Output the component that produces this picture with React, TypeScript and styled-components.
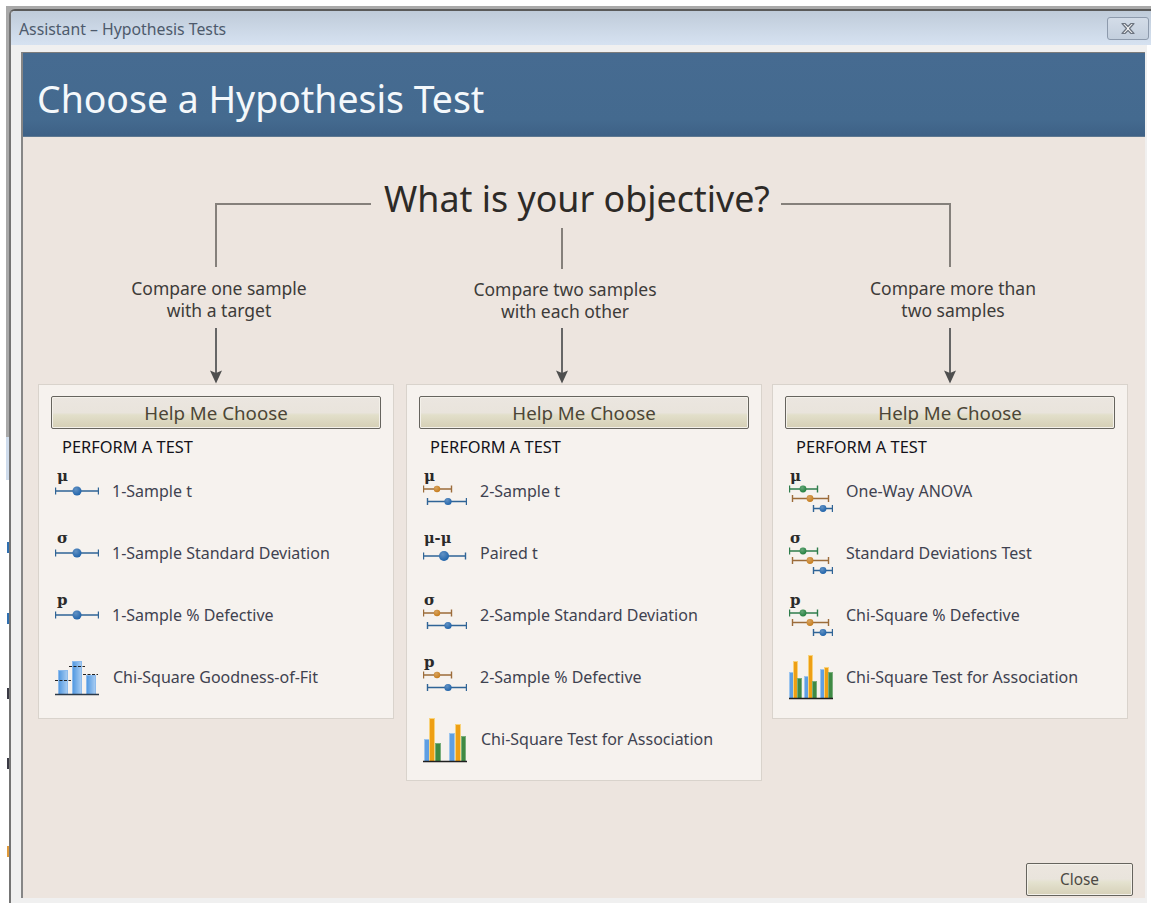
import React from 'react';
import styled, { createGlobalStyle } from 'styled-components';

type Interval = { from: number; to: number; dot: number; y: number; r: number; color: string; stroke: string };
type Bar = { x: number; w: number; y: number; kind: 'blue' | 'orange' | 'green' };

const GlobalStyle = createGlobalStyle`
  html, body {
    margin: 0;
    padding: 0;
    background: #fff;
  }
  * {
    box-sizing: border-box;
  }
`;

const BLUE = { color: '#1f63aa', stroke: '#2f6496' };
const ORANGE = { color: '#c67c1c', stroke: '#9c6c3a' };
const GREEN = { color: '#23803f', stroke: '#2f7d4c' };

// Error-bar glyphs for one, two and several samples
const one = (y = 24, dot = 22, r = 4.5, to = 44): Interval[] => [{ from: 0.5, to, dot, y, r, ...BLUE }];
const two: Interval[] = [
  { from: 0.5, to: 29, dot: 14, y: 22, r: 3.2, ...ORANGE },
  { from: 4.5, to: 44, dot: 25, y: 34.5, r: 3.6, ...BLUE },
];
const three: Interval[] = [
  { from: 0.5, to: 29, dot: 14, y: 22, r: 3.4, ...GREEN },
  { from: 3.5, to: 40, dot: 21, y: 31.5, r: 3.4, ...ORANGE },
  { from: 24.5, to: 44, dot: 34, y: 41.5, r: 3.4, ...BLUE },
];

const barsTwo: Bar[] = [
  { x: 1, w: 6, y: 24, kind: 'blue' },
  { x: 6, w: 6, y: 3, kind: 'orange' },
  { x: 12, w: 6, y: 28, kind: 'green' },
  { x: 26, w: 6, y: 18, kind: 'blue' },
  { x: 32, w: 6, y: 9, kind: 'orange' },
  { x: 38, w: 5, y: 21, kind: 'green' },
];
const barsThree: Bar[] = [
  { x: 0, w: 5, y: 19, kind: 'blue' },
  { x: 4, w: 5, y: 8, kind: 'orange' },
  { x: 8, w: 5, y: 25, kind: 'green' },
  { x: 15, w: 5, y: 23, kind: 'blue' },
  { x: 19, w: 5, y: 2, kind: 'orange' },
  { x: 23, w: 5, y: 28, kind: 'green' },
  { x: 31, w: 5, y: 16, kind: 'blue' },
  { x: 35, w: 5, y: 14, kind: 'orange' },
  { x: 39, w: 5, y: 19, kind: 'green' },
];

const SymbolIntervals = ({ symbol, items }: { symbol: string; items: Interval[] }) => (
  <svg width="44" height="48" viewBox="0 0 44 48">
    <defs>
      <radialGradient id="shine" cx="38%" cy="32%" r="70%">
        <stop offset="0" stopColor="#fff" stopOpacity="0.3" />
        <stop offset="1" stopColor="#fff" stopOpacity="0" />
      </radialGradient>
    </defs>
    <text
      x={items.length === 1 && symbol !== 'μ-μ' ? 2 : 1}
      y="14"
      fontFamily="'DejaVu Serif', 'Liberation Serif', serif"
      fontSize={symbol === 'μ-μ' ? 14.5 : 15}
      fontWeight="700"
      fill="#2a2a2a"
    >
      {symbol}
    </text>
    {items.map((b) => (
      <g key={b.y}>
        <path d={`M${b.from} ${b.y}H${b.to}M${b.from} ${b.y - 3.5}V${b.y + 3.5}M${b.to - 0.5} ${b.y - 3.5}V${b.y + 3.5}`} stroke={b.stroke} strokeWidth="1.4" fill="none" />
        <circle cx={b.dot} cy={b.y} r={b.r} fill={b.color} />
        <circle cx={b.dot} cy={b.y} r={b.r} fill="url(#shine)" />
      </g>
    ))}
  </svg>
);

const GoodnessChart = () => (
  <svg width="44" height="48" viewBox="0 0 44 48">
    <defs>
      <linearGradient id="histFill" x1="0" y1="0" x2="1" y2="0">
        <stop offset="0" stopColor="#4f97e0" />
        <stop offset="1" stopColor="#a9cdf2" />
      </linearGradient>
    </defs>
    {[
      { x: 3, y: 17 },
      { x: 17, y: 8 },
      { x: 31, y: 22 },
    ].map((b) => (
      <rect key={b.x} x={b.x + 0.5} y={b.y + 0.5} width="9" height={41 - b.y} fill="url(#histFill)" stroke="#8dbbec" />
    ))}
    <path d="M0 27.5H16M14 13.5H30M28 21.5H43" stroke="#222" strokeWidth="1" strokeDasharray="3 1.5" fill="none" />
    <path d="M0 41.5H44" stroke="#2c3a48" strokeWidth="1.4" />
  </svg>
);

const AssociationChart = ({ bars, base }: { bars: Bar[]; base: number }) => {
  const fills = {
    blue: { fill: '#5f9fe2', edge: '#9cc5ee' },
    orange: { fill: '#ee9f14', edge: '#f8d27a' },
    green: { fill: '#3f8a44', edge: '#79ad7b' },
  };
  return (
    <svg width="44" height="48" viewBox="0 0 44 48">
      {bars.map((b) => (
        <rect key={b.x} x={b.x + 0.5} y={b.y + 0.5} width={b.w - 1} height={base - b.y} fill={fills[b.kind].fill} stroke={fills[b.kind].edge} />
      ))}
      <path d={`M0 ${base + 0.5}H44`} stroke="#1f1f1f" strokeWidth="1.6" />
    </svg>
  );
};

const CloseGlyph = () => (
  <svg width="16" height="13" viewBox="0 0 16 13">
    <path d="M2 1.5h3l3 3 3-3h3l-4.5 5 4.5 5h-3l-3-3-3 3H2l4.5-5z" fill="#f4f4f4" stroke="#6c7480" strokeWidth="1.2" strokeLinejoin="round" />
  </svg>
);

const DownArrow = () => (
  <svg width="14" height="56" viewBox="0 0 14 56">
    <path d="M7 0V45" stroke="#666" strokeWidth="2" />
    <path d="M1 42.5L7 45L13 42.5L7 55.5z" fill="#4f4f4f" />
  </svg>
);

const Row = ({ icon, label, nudge }: { icon: React.ReactNode; label: string; nudge?: boolean }) => (
  <TestRow>
    <IconSlot>{icon}</IconSlot>
    <TestLabel $nudge={nudge}>{label}</TestLabel>
  </TestRow>
);

const App: React.FC = () => {
  return (
    <Page>
      <GlobalStyle />
      <BackWindow>
        <GrayEdge />
        <BlueEdge />
        <Sliver $top={62} $color="#2f6fb0" />
        <Sliver $top={60} $color="#2f6fb0" />
        <Sliver $top={64} $color="#3a3a44" />
        <Sliver $top={59} $color="#3a3a44" />
        <Sliver $top={77} $color="#e09a3a" />
      </BackWindow>

      <WindowShell>
        <Frame>
          <TitleBar>
            <TitleText>Assistant – Hypothesis Tests</TitleText>
            <CloseBox>
              <CloseGlyph />
            </CloseBox>
          </TitleBar>

          <ClientArea>
            <Panel>
              <Banner>Choose a Hypothesis Test</Banner>

              <Body>
                {/* Objective heading with the connectors running out to each side */}
                <ObjectiveRow>
                  <LeftElbow />
                  <ObjectiveColumn>
                    <Objective>What is your objective?</Objective>
                    <Stem />
                  </ObjectiveColumn>
                  <RightElbow />
                </ObjectiveRow>

                <BranchRow>
                  <Branch $gap={12}>
                    <Caption>
                      Compare one sample
                      <br />
                      with a target
                    </Caption>
                    <ArrowSlot>
                      <DownArrow />
                    </ArrowSlot>
                  </Branch>
                  <Branch $gap={10} $shift={44}>
                    <Caption $low>
                      Compare two samples
                      <br />
                      with each other
                    </Caption>
                    <ArrowSlot>
                      <DownArrow />
                    </ArrowSlot>
                  </Branch>
                  <Branch $gap={0}>
                    <Caption>
                      Compare more than
                      <br />
                      two samples
                    </Caption>
                    <ArrowSlot>
                      <DownArrow />
                    </ArrowSlot>
                  </Branch>
                </BranchRow>

                <CardRow>
                  <Card $gap={12}>
                    <HelpButton>Help Me Choose</HelpButton>
                    <CardHeading>PERFORM A TEST</CardHeading>
                    <Row icon={<SymbolIntervals symbol="μ" items={one()} />} label="1-Sample t" />
                    <Row icon={<SymbolIntervals symbol="σ" items={one()} />} label="1-Sample Standard Deviation" />
                    <Row icon={<SymbolIntervals symbol="p" items={one()} />} label="1-Sample % Defective" />
                    <Row icon={<GoodnessChart />} label="Chi-Square Goodness-of-Fit" nudge />
                  </Card>

                  <Card $gap={10}>
                    <HelpButton>Help Me Choose</HelpButton>
                    <CardHeading>PERFORM A TEST</CardHeading>
                    <Row icon={<SymbolIntervals symbol="μ" items={two} />} label="2-Sample t" />
                    <Row icon={<SymbolIntervals symbol="μ-μ" items={one(27, 21, 5, 43)} />} label="Paired t" />
                    <Row icon={<SymbolIntervals symbol="σ" items={two} />} label="2-Sample Standard Deviation" />
                    <Row icon={<SymbolIntervals symbol="p" items={two} />} label="2-Sample % Defective" />
                    <Row icon={<AssociationChart bars={barsTwo} base={46} />} label="Chi-Square Test for Association" nudge />
                  </Card>

                  <Card $gap={0}>
                    <HelpButton>Help Me Choose</HelpButton>
                    <CardHeading>PERFORM A TEST</CardHeading>
                    <Row icon={<SymbolIntervals symbol="μ" items={three} />} label="One-Way ANOVA" />
                    <Row icon={<SymbolIntervals symbol="σ" items={three} />} label="Standard Deviations Test" />
                    <Row icon={<SymbolIntervals symbol="p" items={three} />} label="Chi-Square % Defective" />
                    <Row icon={<AssociationChart bars={barsThree} base={45} />} label="Chi-Square Test for Association" />
                  </Card>
                </CardRow>

                <Footer>
                  <CloseButton>Close</CloseButton>
                </Footer>
              </Body>
            </Panel>
          </ClientArea>
        </Frame>
      </WindowShell>
    </Page>
  );
};

// Styled Components
const UI_FONT = `'Noto Sans', 'Open Sans', 'Liberation Sans', sans-serif`;

const Page = styled.div`
  display: flex;
  width: 1151px;
  height: 903px;
  overflow: hidden;
  background: #fff;
  font-family: ${UI_FONT};
`;

const BackWindow = styled.div`
  flex: none;
  width: 9px;
  padding: 6px 0 0 6px;
  display: flex;
  flex-direction: column;
`;

const GrayEdge = styled.div`
  height: 431px;
  background: #a9a9a9;
`;

const BlueEdge = styled.div`
  height: 43px;
  background: #cfdcec;
`;

const Sliver = styled.div<{ $top: number; $color: string }>`
  flex: none;
  height: 11px;
  margin-top: ${(p) => p.$top}px;
  margin-left: 1px;
  background: ${(p) => p.$color};
`;

const WindowShell = styled.div`
  flex: 1;
  min-width: 0;
  margin-top: 6px;
  padding-top: 3px;
  background: #a9a9a9;
`;

const Frame = styled.div`
  height: 100%;
  background: #fff;
  border-top: 2px solid #5a5a5a;
  border-left: 2px solid #747474;
  border-top-left-radius: 6px;
  overflow: hidden;
  display: flex;
  flex-direction: column;
`;

const TitleBar = styled.div`
  flex: none;
  height: 34px;
  display: flex;
  align-items: center;
  justify-content: space-between;
  padding: 0 2px 0 8px;
  background: linear-gradient(#bfcbd9, #d6e2f1);
`;

const TitleText = styled.div`
  padding-top: 2px;
  font-size: 15.8px;
  color: #4d5a6c;
`;

const CloseBox = styled.div`
  width: 42px;
  height: 23px;
  display: flex;
  align-items: center;
  justify-content: center;
  border: 1px solid #8d9aac;
  border-radius: 3px;
  background: linear-gradient(#d3dce8, #c3cfdd);
`;

const ClientArea = styled.div`
  flex: 1;
  min-height: 0;
  margin-right: 4px;
  padding: 7px 2px 5px 10px;
  background: #f0f0f0;
  display: flex;
`;

const Panel = styled.div`
  flex: 1;
  display: flex;
  flex-direction: column;
  border-left: 2px solid #868686;
  border-top: 1px solid #7c7c7c;
`;

const Banner = styled.div`
  flex: none;
  height: 84px;
  padding: 8px 0 0 14px;
  display: flex;
  align-items: center;
  font-size: 37.4px;
  color: #f4f8fb;
  background: linear-gradient(#466b91, #446a8f 80%, #3e6186);
  border-bottom: 1px solid #5e7891;
`;

const Body = styled.div`
  flex: 1;
  min-height: 0;
  display: flex;
  flex-direction: column;
  background: #ede5df;
`;

const ObjectiveRow = styled.div`
  flex: none;
  height: 132px;
  display: flex;
  align-items: flex-start;
`;

const LeftElbow = styled.div`
  flex: none;
  width: 156px;
  height: 64px;
  margin: 66px 13px 0 192px;
  border-top: 2px solid #85807b;
  border-left: 2px solid #85807b;
`;

const ObjectiveColumn = styled.div`
  flex: none;
  width: 386px;
  padding-top: 36px;
`;

const Objective = styled.div`
  height: 50px;
  font-size: 35.8px;
  line-height: 50px;
  white-space: nowrap;
  color: #2d2a27;
`;

const Stem = styled.div`
  width: 2px;
  height: 41px;
  margin: 5px 0 0 177px;
  background: #85807b;
`;

const RightElbow = styled.div`
  flex: none;
  width: 170px;
  height: 64px;
  margin: 66px 0 0 11px;
  border-top: 2px solid #85807b;
  border-right: 2px solid #85807b;
`;

const BranchRow = styled.div`
  flex: none;
  height: 115px;
  padding-left: 15px;
  display: flex;
`;

const Branch = styled.div<{ $gap: number; $shift?: number }>`
  flex: none;
  width: 356px;
  margin-right: ${(p) => p.$gap}px;
  padding-right: ${(p) => p.$shift ?? 0}px;
  display: flex;
  flex-direction: column;
  align-items: center;
`;

const Caption = styled.div<{ $low?: boolean }>`
  margin-top: ${(p) => (p.$low ? 9 : 8)}px;
  padding-left: 6px;
  font-size: 17.5px;
  line-height: 22px;
  text-align: center;
  color: #3d3b39;
`;

const ArrowSlot = styled.div`
  margin-top: auto;
  height: 56px;
  line-height: 0;
`;

const CardRow = styled.div`
  flex: none;
  padding-left: 15px;
  display: flex;
  align-items: flex-start;
`;

const Card = styled.div<{ $gap: number }>`
  flex: none;
  width: 356px;
  margin-right: ${(p) => p.$gap}px;
  padding: 11px 12px 10px 12px;
  background: #f6f2ee;
  border: 1px solid #d9d3cc;
`;

const HelpButton = styled.div`
  height: 33px;
  display: flex;
  align-items: center;
  justify-content: center;
  font-size: 18.7px;
  color: #4c4636;
  border: 1px solid #66645e;
  border-radius: 2px;
  box-shadow: inset 0 0 0 1px #f4f1ea;
  background: linear-gradient(#ebe6e0 0%, #e9e4dc 50%, #e2dfca 58%, #d5cfb5 100%);
`;

const CardHeading = styled.div`
  height: 31px;
  padding: 3px 0 0 11px;
  display: flex;
  align-items: center;
  font-size: 16.4px;
  color: #14121a;
`;

const TestRow = styled.div`
  height: 62px;
  display: flex;
  align-items: center;
`;

const IconSlot = styled.div`
  flex: none;
  width: 44px;
  height: 48px;
  margin-left: 4px;
  line-height: 0;
`;

const TestLabel = styled.div<{ $nudge?: boolean }>`
  margin-left: ${(p) => (p.$nudge ? 14 : 13)}px;
  font-size: 16px;
  color: #3f4250;
  white-space: nowrap;
`;

const Footer = styled.div`
  margin-top: auto;
  padding: 0 12px 2px 0;
  display: flex;
  justify-content: flex-end;
`;

const CloseButton = styled.div`
  width: 107px;
  height: 33px;
  display: flex;
  align-items: center;
  justify-content: center;
  font-size: 15.4px;
  color: #4c4a44;
  border: 1px solid #66645e;
  border-radius: 2px;
  box-shadow: inset 0 0 0 1px #f4f1ea;
  background: linear-gradient(#ece6df 0%, #e9e4dc 48%, #e4e2cf 58%, #d6d0b8 100%);
`;

export default App;
